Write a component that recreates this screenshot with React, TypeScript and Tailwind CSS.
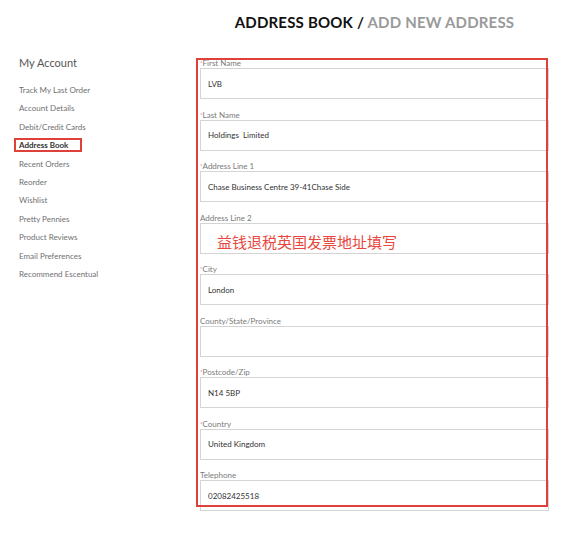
import React from 'react';

interface Field {
  label: string;
  required?: boolean;
  value?: string;
  note?: string;
}

const menu = [
  'Track My Last Order',
  'Account Details',
  'Debit/Credit Cards',
  'Address Book',
  'Recent Orders',
  'Reorder',
  'Wishlist',
  'Pretty Pennies',
  'Product Reviews',
  'Email Preferences',
  'Recommend Escentual',
];

const fields: Field[] = [
  { label: 'First Name', required: true, value: 'LVB' },
  { label: 'Last Name', required: true, value: 'Holdings  Limited' },
  { label: 'Address Line 1', required: true, value: 'Chase Business Centre 39-41Chase Side' },
  { label: 'Address Line 2', note: '益钱退税英国发票地址填写' },
  { label: 'City', required: true, value: 'London' },
  { label: 'County/State/Province' },
  { label: 'Postcode/Zip', required: true, value: 'N14 5BP' },
  { label: 'Country', required: true, value: 'United Kingdom' },
  { label: 'Telephone', value: '02082425518' },
];

function Sidebar() {
  return (
    <aside className="w-[181px] shrink-0 pt-[56px]">
      <h2 className="text-[11px] leading-[14px] text-[#555]">My Account</h2>
      <ul className="mt-[11px] text-[8px] leading-[18.4px] text-[#707070]">
        {menu.map((item) =>
          item === 'Address Book' ? (
            <li key={item}>
              <span className="-ml-[5px] inline-block border-2 border-[#e0403a] pl-[3px] pr-[12px] font-bold leading-[10px] text-[#333]">
                {item}
              </span>
            </li>
          ) : (
            <li key={item}>{item}</li>
          )
        )}
      </ul>
    </aside>
  );
}

function FormField({ field }: { field: Field }) {
  return (
    <div>
      <label className="block h-[10px] text-[8px] leading-[10px] text-[#7a7a7a]">
        {field.required && <span className="text-[6px] align-top text-[#d46a6a]">*</span>}
        {field.label}
      </label>
      <div className="flex h-[31px] items-center whitespace-pre border border-[#d4d4d4] bg-white px-[7px] text-[8px] text-[#333]">
        {field.value}
        {field.note && (
          <span className="pl-[9px] pt-[9px] font-['Noto_Sans_CJK_SC',sans-serif] text-[15px] text-[#e8473e]">
            {field.note}
          </span>
        )}
      </div>
    </div>
  );
}

export default function App() {
  return (
    <div className="flex h-[538px] w-[566px] bg-white pl-[19px] font-['Lato','Liberation_Sans',sans-serif]">
      <Sidebar />
      <main className="w-[349px] shrink-0 pt-[13px]">
        <h1 className="text-center text-[15px] font-bold leading-[18px] tracking-[0.2px] text-[#111]">
          ADDRESS BOOK / <span className="text-[#9a9a9a]">ADD NEW ADDRESS</span>
        </h1>
        <div className="relative mt-[27px] flex flex-col gap-[10.5px]">
          {fields.map((f) => (
            <FormField key={f.label} field={f} />
          ))}
          {/* highlight frame drawn over the form */}
          <div className="pointer-events-none absolute -left-[4px] top-0 h-[449px] w-[352px] border-2 border-[#e0403a]" />
        </div>
      </main>
    </div>
  );
}
